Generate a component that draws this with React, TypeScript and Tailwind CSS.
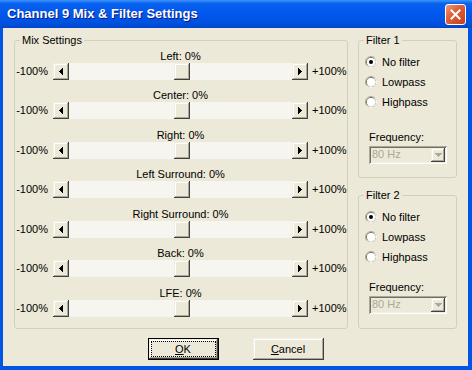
import React from "react";

const raised =
  "shadow-[inset_-1px_-1px_0_#404040,inset_1px_1px_0_#F1EFE2,inset_-2px_-2px_0_#ACA899,inset_2px_2px_0_#FFFFFF]";

function LeftArrow() {
  return (
    <svg width="4" height="7" viewBox="0 0 4 7" shapeRendering="crispEdges">
      <path d="M3 0h1v7h-1zM2 1h1v5h-1zM1 2h1v3h-1zM0 3h1v1h-1z" fill="#000" />
    </svg>
  );
}

function RightArrow() {
  return (
    <svg width="4" height="7" viewBox="0 0 4 7" shapeRendering="crispEdges">
      <path d="M0 0h1v7h-1zM1 1h1v5h-1zM2 2h1v3h-1zM3 3h1v1h-1z" fill="#000" />
    </svg>
  );
}

function DownArrow() {
  return (
    <svg width="7" height="4" viewBox="0 0 7 4" shapeRendering="crispEdges">
      <path d="M0 0h7v1h-7zM1 1h5v1h-5zM2 2h3v1h-3zM3 3h1v1h-1z" fill="#ACA899" />
    </svg>
  );
}

function Radio({ checked }: { checked?: boolean }) {
  return (
    <svg width="12" height="12" viewBox="0 0 12 12">
      <circle cx="6" cy="6" r="5.5" fill="none" stroke="#ACA899" />
      <path d="M9.89 2.11 A5.5 5.5 0 0 1 2.11 9.89" fill="none" stroke="#FFFFFF" />
      <circle cx="6" cy="6" r="4.5" fill="none" stroke="#716F64" />
      <path d="M9.18 2.82 A4.5 4.5 0 0 1 2.82 9.18" fill="none" stroke="#ECE9D8" />
      <circle cx="6" cy="6" r="4" fill="#FFFFFF" />
      {checked && <circle cx="6" cy="6" r="2" fill="#000" />}
    </svg>
  );
}

function Slider({ label }: { label: string }) {
  return (
    <div className="flex items-end">
      <div className="w-[38px] h-[17px] flex items-center justify-end pr-[5px]">-100%</div>
      <div className="flex flex-col w-[255px]">
        <div className="h-[13px] leading-[13px] text-center">{label}</div>
        <div className="flex h-[17px]">
          <div className={`w-[16px] h-[17px] bg-[#ECE9D8] flex items-center justify-center ${raised}`}>
            <LeftArrow />
          </div>
          <div className="flex-1 bg-[#F6F5EF] flex justify-center">
            <div className={`w-[16px] h-[17px] bg-[#ECE9D8] ml-[2px] ${raised}`} />
          </div>
          <div className={`w-[16px] h-[17px] bg-[#ECE9D8] flex items-center justify-center ${raised}`}>
            <RightArrow />
          </div>
        </div>
      </div>
      <div className="h-[17px] flex items-center pl-[4px]">+100%</div>
    </div>
  );
}

function FilterGroup({ title, className, freqGap }: { title: string; className: string; freqGap: string }) {
  return (
    <fieldset className={`border border-[#D0D0BF] rounded-[3px] ${className}`}>
      <legend className="ml-[5px] px-[2px] leading-[13px]">{title}</legend>
      <div className="flex flex-col pt-[5px] pl-[6px]">
        {[
          ["No filter", true],
          ["Lowpass", false],
          ["Highpass", false],
        ].map(([t, c]) => (
          <div key={t as string} className="h-[20px] flex items-center gap-[5px]">
            <Radio checked={c as boolean} />
            <span className="leading-[13px]">{t as string}</span>
          </div>
        ))}
      </div>
      <div className={`pl-[10px] flex flex-col ${freqGap}`}>
        <div className="h-[13px] leading-[13px] mb-[2px]">Frequency:</div>
        <div className="w-[78px] h-[18px] flex bg-[#ECE9D8] shadow-[inset_1px_1px_0_#ACA899,inset_-1px_-1px_0_#FFFFFF,inset_2px_2px_0_#716F64,inset_-2px_-2px_0_#F1EFE2] p-[2px]">
          <div className="flex-1 flex items-center pl-[1px] text-[#ACA899] leading-[13px]">80 Hz</div>
          <div className={`w-[14px] h-[14px] bg-[#ECE9D8] flex items-center justify-center ${raised}`}>
            <DownArrow />
          </div>
        </div>
      </div>
    </fieldset>
  );
}

export default function App() {
  const sliders = ["Left: 0%", "Center: 0%", "Right: 0%", "Left Surround: 0%", "Right Surround: 0%", "Back: 0%", "LFE: 0%"];
  return (
    <div
      className="w-[472px] h-[370px] bg-[#0055E5] flex flex-col text-[11px] text-black select-none"
      style={{ fontFamily: '"Liberation Sans", Arial, sans-serif' }}
    >
      <div className="h-[28px] shrink-0 flex items-center justify-between pl-[7px] pr-[6px] bg-[linear-gradient(to_bottom,#3D95FF_0%,#0A62EE_12%,#0058EE_45%,#0052E0_80%,#0046CC_100%)]">
        <span className="text-white font-bold text-[13px] leading-[16px] [text-shadow:1px_1px_#0A1883]">
          Channel 9 Mix &amp; Filter Settings
        </span>
        <div className="w-[21px] h-[21px] rounded-[3px] border border-white bg-[linear-gradient(to_bottom_right,#F09A7A_0%,#E0603A_40%,#C8401C_100%)] flex items-center justify-center">
          <svg width="11" height="11" viewBox="0 0 11 11">
            <path d="M1.5 1.5L9.5 9.5M9.5 1.5L1.5 9.5" stroke="#FFFFFF" strokeWidth="2" strokeLinecap="square" />
          </svg>
        </div>
      </div>
      <div className="flex-1 ml-[3px] mr-[4px] mb-[4px] bg-[#ECE9D8] flex flex-col pt-[6px] px-[11px]">
        <div className="flex gap-[10px]">
          <fieldset className="w-[334px] h-[295px] border border-[#D0D0BF] rounded-[3px]">
            <legend className="ml-[5px] px-[2px] leading-[13px]">Mix Settings</legend>
            <div className="flex flex-col gap-[9.5px] pt-[2.5px]">
              {sliders.map((s) => (
                <Slider key={s} label={s} />
              ))}
            </div>
          </fieldset>
          <div className="flex-1 flex flex-col gap-[11px]">
            <FilterGroup title="Filter 1" className="h-[144px]" freqGap="mt-[18.5px]" />
            <FilterGroup title="Filter 2" className="h-[140px]" freqGap="mt-[13.5px]" />
          </div>
        </div>
        <div className="flex justify-center gap-[34px] mt-[9px]">
          <div className={`w-[71px] h-[22px] border border-black bg-[#ECE9D8] p-[2px] ${raised}`}>
            <div className="h-full border border-dotted border-black flex items-center justify-center">
              <span>
                <span className="underline">O</span>K
              </span>
            </div>
          </div>
          <div className={`w-[71px] h-[22px] bg-[#ECE9D8] flex items-center justify-center ${raised}`}>
            <span>
              <span className="underline">C</span>ancel
            </span>
          </div>
        </div>
      </div>
    </div>
  );
}
